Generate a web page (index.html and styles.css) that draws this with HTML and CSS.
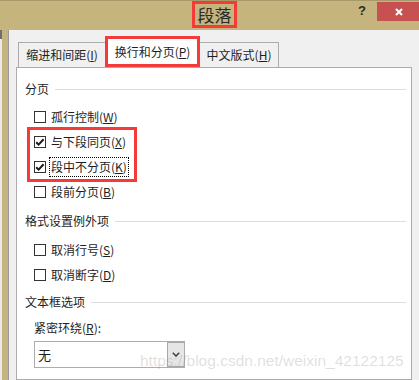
FILE: index.html
```html
<!DOCTYPE html>
<html lang="zh">
<head>
<meta charset="utf-8">
<title>段落</title>
<link rel="stylesheet" href="styles.css">
</head>
<body>
<div class="window">
  <div class="titlebar">
    <span class="title">段落</span>
    <span class="help">?</span>
    <span class="close"><svg width="8" height="8" viewBox="0 0 8 8"><path d="M1 1L7 7M7 1L1 7" stroke="#fff" stroke-width="2" fill="none"/></svg></span>
  </div>
  <div class="main">
    <div class="strip"><span class="strip-dark"></span></div>
    <div class="frame"></div>
    <div class="dialog">
      <div class="tabs">
        <div class="tab tab-indent">缩进和间距(<u>I</u>)</div>
        <div class="tab tab-active">换行和分页(<u>P</u>)</div>
        <div class="tab tab-asian">中文版式(<u>H</u>)</div>
      </div>
      <div class="panel">
        <div class="section first">
          <span class="section-label">分页</span><span class="rule"></span>
        </div>
        <div class="options">
          <div class="option"><span class="box"></span><span class="label">孤行控制(<u>W</u>)</span></div>
          <div class="option"><span class="box"><svg width="10" height="10" viewBox="0 0 10 10"><path d="M1.2 5.2L3.6 7.6L8.6 2.2" stroke="#1a1a1a" stroke-width="2" fill="none"/></svg></span><span class="label">与下段同页(<u>X</u>)</span></div>
          <div class="option"><span class="box"><svg width="10" height="10" viewBox="0 0 10 10"><path d="M1.2 5.2L3.6 7.6L8.6 2.2" stroke="#1a1a1a" stroke-width="2" fill="none"/></svg></span><span class="label focus">段中不分页(<u>K</u>)</span></div>
          <div class="option"><span class="box"></span><span class="label">段前分页(<u>B</u>)</span></div>
        </div>
        <div class="section second">
          <span class="section-label">格式设置例外项</span><span class="rule"></span>
        </div>
        <div class="options options-tight">
          <div class="option"><span class="box"></span><span class="label">取消行号(<u>S</u>)</span></div>
          <div class="option"><span class="box"></span><span class="label">取消断字(<u>D</u>)</span></div>
        </div>
        <div class="section third">
          <span class="section-label">文本框选项</span><span class="rule"></span>
        </div>
        <div class="field-label">紧密环绕(<u>R</u>):</div>
        <div class="select">
          <span class="select-value">无</span>
          <span class="select-btn"><svg width="8" height="5" viewBox="0 0 8 5"><path d="M0.8 0.8L4 4L7.2 0.8" stroke="#444" stroke-width="1.6" fill="none"/></svg></span>
        </div>
        <div class="highlight"></div>
        <div class="watermark">https://blog.csdn.net/weixin_42122125</div>
      </div>
    </div>
  </div>
</div>
</body>
</html>
```

FILE: styles.css
```css
* { box-sizing: border-box; }

html, body {
  margin: 0;
  padding: 0;
}

body {
  width: 419px;
  height: 380px;
  overflow: hidden;
  background: #f0f0f0;
  font-family: "Noto Sans CJK SC", "Noto Sans", sans-serif;
  font-size: 12px;
  color: #1e1e1e;
}

u { text-decoration: underline; text-underline-offset: 1px; }

.window {
  width: 419px;
  height: 380px;
  display: flex;
  flex-direction: column;
}

.titlebar {
  height: 30px;
  flex: none;
  background: #c5b47e;
  border-top: 1px solid #a8996a;
  display: flex;
  align-items: flex-start;
}

.title {
  margin-left: 192px;
  width: 45px;
  height: 27px;
  border: 3px solid #f53a3a;
  font-size: 17px;
  line-height: 21px;
  color: #2a2a2a;
  display: flex;
  justify-content: center;
  align-items: center;
}

.help {
  margin-left: auto;
  margin-right: 11px;
  font-family: "Liberation Sans", Arial, sans-serif;
  font-weight: bold;
  font-size: 13px;
  line-height: 20px;
  color: #2b2b2b;
}

.close {
  width: 42px;
  height: 19px;
  margin-top: 1px;
  background: #c75050;
  display: flex;
  align-items: center;
  justify-content: center;
}

.close svg { display: block; margin-left: 2px; }

.main {
  flex: 1;
  display: flex;
  min-height: 0;
}

.strip {
  width: 2px;
  background: #e9e9e9;
  display: flex;
  flex-direction: column;
}

.strip-dark {
  height: 9px;
  background: #6e6e6e;
}

.frame {
  width: 7px;
  background: #c5b47e;
  border-right: 1px solid #9b9b9b;
}

.dialog {
  flex: 1;
  background: #f0f0f0;
  padding: 6px 7px 0 7px;
  display: flex;
  flex-direction: column;
}

.tabs {
  height: 31px;
  display: flex;
  align-items: flex-end;
  padding-left: 2px;
}

.tab {
  height: 25px;
  display: flex;
  align-items: center;
  justify-content: center;
  line-height: 16px;
  color: #1e1e1e;
  background: #f0f0f0;
  border: 1px solid #acacac;
  border-bottom: none;
}

.tab-indent { width: 87px; border-right: none; }

.tab-active {
  width: 95px;
  height: 31px;
  background: #fff;
  border: 3px solid #f53a3a;
  padding-top: 1px;
}

.tab-asian { width: 79px; border-left: none; }

.panel {
  position: relative;
  height: 340px;
  background: #fff;
  border: 1px solid #acacac;
  padding: 0 5px 0 8px;
  display: flex;
  flex-direction: column;
}

.section {
  height: 24px;
  display: flex;
  align-items: center;
  gap: 6px;
  line-height: 16px;
}

.section.first { margin-top: 9px; }
.section.second { margin-top: 5px; }
.section.third { margin-top: 3px; }

.rule {
  flex: 1;
  height: 1px;
  background: #dcdcdc;
}

.options {
  margin-top: 3px;
  padding-left: 9px;
  display: flex;
  flex-direction: column;
}

.options-tight { margin-top: 4px; }

.option {
  height: 25px;
  display: flex;
  align-items: center;
  gap: 5px;
  line-height: 16px;
}

.box {
  width: 12px;
  height: 12px;
  border: 1px solid #333;
  background: #fff;
  display: flex;
  align-items: center;
  justify-content: center;
  flex: none;
}

.box svg { display: block; }

.label { padding: 0 2px 0 0; }

.focus {
  margin-left: -2px;
  padding: 1px 1px 1px 1px;
  height: 20px;
  border: 1px dotted #000;
  display: flex;
  align-items: center;
}

.field-label {
  margin-top: 4px;
  padding-left: 9px;
  height: 20px;
  line-height: 20px;
}

.select {
  margin-top: 3px;
  margin-left: 9px;
  width: 151px;
  height: 27px;
  border: 1px solid #acacac;
  background: #fff;
  display: flex;
  align-items: stretch;
}

.select-value {
  flex: 1;
  padding-left: 3px;
  font-size: 13px;
  display: flex;
  align-items: center;
}

.select-btn {
  width: 17px;
  margin: 0;
  background: #e6e6e6;
  border: 1px solid #a9a9a9;
  border-right: none;
  border-bottom-width: 1px;
  display: flex;
  align-items: center;
  justify-content: center;
}

.select-btn svg { display: block; }

.highlight {
  position: absolute;
  left: 10px;
  top: 59px;
  width: 110px;
  height: 55px;
  border: 3px solid #f53a3a;
  pointer-events: none;
}

.watermark {
  position: absolute;
  left: 123px;
  top: 284px;
  font-family: "Liberation Sans", Arial, sans-serif;
  font-size: 15.5px;
  line-height: 18px;
  color: rgba(140, 140, 140, 0.28);
  white-space: nowrap;
  pointer-events: none;
}
```
